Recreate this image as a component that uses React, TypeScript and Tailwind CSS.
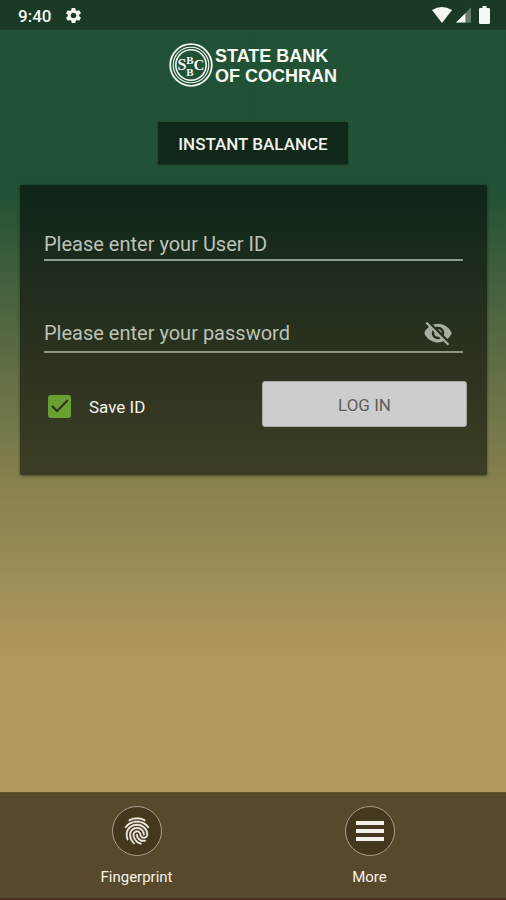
import { useState } from "react";
import { MdFingerprint, MdSettings, MdVisibilityOff } from "react-icons/md";

function StatusBar() {
    return (
        <header className="flex h-[30px] items-center justify-between bg-[#1b3a26] pr-4 pl-[18px] text-[#f4f7f2]">
            <div className="flex items-center gap-[13px]">
                <span className="pt-0.5 text-[17px] leading-6 font-medium">9:40</span>
                <MdSettings className="h-[19px] w-[19px]" />
            </div>
            <div className="flex items-center gap-1">
                <svg viewBox="0 0 20 16" className="h-4 w-5" fill="currentColor" aria-hidden="true">
                    <path d="M10 16 0 3Q10-3 20 3Z" />
                </svg>
                <svg viewBox="0 0 16 16" className="h-4 w-[15px]" fill="currentColor" aria-hidden="true">
                    <path d="M16 0v16H0Z" opacity=".35" />
                    <path d="M10 6v10H0Z" />
                </svg>
                <svg viewBox="0 0 11 18" className="ml-1 h-[18px] w-[11px]" fill="currentColor" aria-hidden="true">
                    <path d="M3.5 0h4v2H10q1 0 1 1v14q0 1-1 1H1q-1 0-1-1V3q0-1 1-1h2.5Z" />
                </svg>
            </div>
        </header>
    );
}

function Logo() {
    return (
        <div className="flex items-center gap-0.5 text-[#f7f9f3]">
            <svg viewBox="0 0 44 44" className="h-11 w-11" fill="none" stroke="currentColor" role="img" aria-label="SBC">
                <circle cx="22" cy="22" r="20.8" strokeWidth="1.8" />
                <circle cx="22" cy="22" r="17.8" strokeWidth="1.1" />
                <circle cx="22" cy="22" r="15.2" strokeWidth="1.6" />
                <g
                    fill="currentColor"
                    stroke="none"
                    fontFamily="Liberation Serif, serif"
                    fontWeight="700"
                    textAnchor="middle"
                >
                    <text x="13" y="27" fontSize="16">S</text>
                    <text x="21" y="21" fontSize="11">B</text>
                    <text x="21" y="33" fontSize="11">B</text>
                    <text x="30" y="27" fontSize="15">C</text>
                </g>
            </svg>
            <h1 className="pt-0.5 font-['Liberation_Sans',sans-serif] text-[18px] leading-5 font-bold">
                STATE BANK
                <br />
                OF COCHRAN
            </h1>
        </div>
    );
}

function LoginCard() {
    const [saveId, setSaveId] = useState(true);
    const [showPassword, setShowPassword] = useState(false);

    return (
        <form
            className="mt-[21px] mr-[19px] ml-5 rounded-xs bg-black/53 px-6 pt-10 pb-12 shadow-[0_1px_3px_rgba(0,0,0,0.45)]"
            onSubmit={(e) => e.preventDefault()}
        >
            <input
                type="text"
                aria-label="User ID"
                placeholder="Please enter your User ID"
                className="block h-9 w-full border-b-2 border-[#8f9b8b] bg-transparent pt-1 text-xl text-white outline-none placeholder:text-[#bcc4ba]"
            />
            <div className="mt-[54px] flex h-[38px] items-center border-b-2 border-[#8f957f]">
                <input
                    type={showPassword ? "text" : "password"}
                    aria-label="Password"
                    placeholder="Please enter your password"
                    className="min-w-0 flex-1 bg-transparent text-xl text-white outline-none placeholder:text-[#bcc2b6]"
                />
                <button
                    type="button"
                    aria-label="Show password"
                    className="mr-[10px] text-[#a7aea2]"
                    onClick={() => setShowPassword(!showPassword)}
                >
                    <MdVisibilityOff className="h-[30px] w-[30px]" />
                </button>
            </div>
            <div className="-mr-1 mt-7 flex items-center justify-between">
                <label className="flex items-center gap-[18px] pt-1 pl-1 text-[17px] text-[#f1f3ee]">
                    <span className="grid h-[23px] w-[23px]">
                        <input
                            type="checkbox"
                            checked={saveId}
                            onChange={(e) => setSaveId(e.target.checked)}
                            className="col-start-1 row-start-1 h-full w-full appearance-none rounded-[3px] border-2 border-[#68a032] checked:bg-[#68a032]"
                        />
                        {saveId && (
                            <svg
                                viewBox="0 0 23 23"
                                className="pointer-events-none col-start-1 row-start-1"
                                fill="none"
                                stroke="#2c3520"
                                strokeWidth="2.2"
                                aria-hidden="true"
                            >
                                <path d="m4 11 5 5L20 5" />
                            </svg>
                        )}
                    </span>
                    <span className="pt-1">Save ID</span>
                </label>
                <button
                    type="submit"
                    className="h-[46px] w-[205px] rounded-[3px] border border-[#aaa9a4] bg-[#cdcdcd] pt-1 text-[17px] text-[#5d5d5d]"
                >
                    LOG IN
                </button>
            </div>
        </form>
    );
}

function BottomNav() {
    return (
        <nav className="grid h-[108px] grid-cols-2 justify-items-center border-t border-b-2 border-[#65552f] border-b-[#4d2f24] bg-[#574a2c] px-5 pt-[13px] text-[15px] leading-5 text-[#f5f1e9]">
            <button type="button" className="flex w-32 flex-col items-center gap-[11px] self-start">
                <span className="flex h-[50px] w-[50px] items-center justify-center rounded-full border border-[#a99e89] bg-[#43381e]">
                    <MdFingerprint className="h-8 w-8 [&_path[fill=none]]:hidden" stroke="currentColor" strokeWidth="0.4" />
                </span>
                Fingerprint
            </button>
            <button type="button" className="flex w-32 flex-col items-center gap-[11px] self-start">
                <span className="flex h-[50px] w-[50px] items-center justify-center rounded-full border border-[#a99e89] bg-[#43381e]">
                    <svg viewBox="0 0 28 20" className="h-5 w-7" fill="currentColor" aria-hidden="true">
                        <path d="M0 0h28v4H0zM0 8h28v4H0zM0 16h28v4H0z" />
                    </svg>
                </span>
                More
            </button>
        </nav>
    );
}

export default function App() {
    return (
        <div className="flex min-h-screen flex-col bg-linear-to-b from-[#225235] from-22% via-[#85804e] via-53% to-[#b1985d] to-73% font-[Roboto,sans-serif]">
            <StatusBar />
            <main className="flex flex-1 flex-col">
                <div className="flex justify-center pt-[13px]">
                    <Logo />
                </div>
                <button
                    type="button"
                    className="mt-[35px] h-[42px] self-center bg-[#10271a] px-5 pt-1 text-[17px] font-medium text-[#f1f4ee] shadow-[0_1px_2px_rgba(0,0,0,0.4)]"
                >
                    INSTANT BALANCE
                </button>
                <LoginCard />
            </main>
            <BottomNav />
        </div>
    );
}
